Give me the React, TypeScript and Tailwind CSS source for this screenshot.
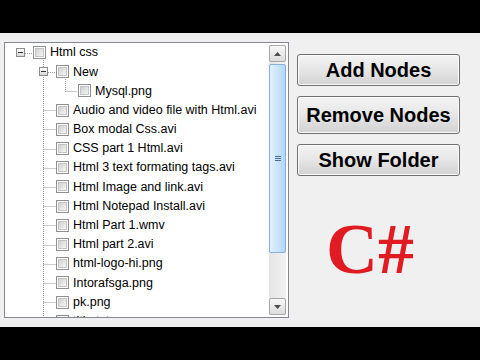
import type { ReactNode } from 'react'

type Node = {
    label: string
    level: number
    open?: boolean
}

const nodes: Node[] = [
    { label: 'Html css', level: 0, open: true },
    { label: 'New', level: 1, open: true },
    { label: 'Mysql.png', level: 2 },
    { label: 'Audio and video file with Html.avi', level: 1 },
    { label: 'Box modal Css.avi', level: 1 },
    { label: 'CSS part 1 Html.avi', level: 1 },
    { label: 'Html 3 text formating tags.avi', level: 1 },
    { label: 'Html Image and link.avi', level: 1 },
    { label: 'Html Notepad Install.avi', level: 1 },
    { label: 'Html Part 1.wmv', level: 1 },
    { label: 'Html part 2.avi', level: 1 },
    { label: 'html-logo-hi.png', level: 1 },
    { label: 'Intorafsga.png', level: 1 },
    { label: 'pk.png', level: 1 },
    { label: 'title.txt', level: 1 },
]

const indent = ['pl-0', 'pl-[23px]', 'pl-[45px]']

const ROW = 19.2

function Expander() {
    return (
        <div className="ml-[11px] w-[9px] h-[9px] border border-[#8c8c8c] bg-gradient-to-b from-white to-[#d8d8d8] flex items-center justify-center">
            <div className="w-[5px] h-px bg-[#333]" />
        </div>
    )
}

function CheckBox() {
    return (
        <div className="w-[13px] h-[13px] shrink-0 border border-[#8e8f8f] bg-white p-px">
            <div className="w-full h-full bg-gradient-to-br from-[#d0d0d0] to-[#f6f6f6] border border-[#c4c4c4]" />
        </div>
    )
}

function TreeRow({ node }: { node: Node }) {
    return (
        <div className={`h-[19.2px] flex items-center shrink-0 ${indent[node.level]}`}>
            <div className="w-[28px] shrink-0 flex items-center">
                {node.open && <Expander />}
            </div>
            <CheckBox />
            <span className="ml-[4px] text-[12.5px] text-black whitespace-nowrap leading-none">
                {node.label}
            </span>
        </div>
    )
}

// dotted connector lines of the tree
function TreeLines() {
    const cy = (i: number) => Math.round(9.6 + ROW * i) + 0.5
    const lines: ReactNode[] = []
    const dot = { stroke: '#9a9a9a', strokeWidth: 1, strokeDasharray: '1 1' }

    lines.push(<line key="r" x1={20} y1={cy(0)} x2={28} y2={cy(0)} {...dot} />)
    lines.push(<line key="v1a" x1={38.5} y1={17} x2={38.5} y2={24} {...dot} />)
    lines.push(<line key="v1b" x1={38.5} y1={34} x2={38.5} y2={280} {...dot} />)
    lines.push(<line key="n" x1={43} y1={cy(1)} x2={51} y2={cy(1)} {...dot} />)
    lines.push(<line key="v2" x1={60.5} y1={36} x2={60.5} y2={cy(2)} {...dot} />)
    lines.push(<line key="m" x1={60.5} y1={cy(2)} x2={72} y2={cy(2)} {...dot} />)
    for (let i = 3; i < nodes.length; i++) {
        lines.push(<line key={i} x1={38.5} y1={cy(i)} x2={51} y2={cy(i)} {...dot} />)
    }

    return (
        <svg className="absolute left-0 top-0 pointer-events-none" width="262" height="280">
            {lines}
        </svg>
    )
}

function ScrollButton({ down }: { down?: boolean }) {
    return (
        <div className="h-[17px] shrink-0 border border-[#a7a7a7] rounded-[2px] bg-gradient-to-b from-[#f8f8f8] to-[#dcdcdc] flex items-center justify-center">
            <svg width="7" height="4" viewBox="0 0 7 4">
                {down ? (
                    <path d="M0 0 H7 L3.5 4 Z" fill="#4d4d4d" />
                ) : (
                    <path d="M0 4 H7 L3.5 0 Z" fill="#4d4d4d" />
                )}
            </svg>
        </div>
    )
}

function ScrollBar() {
    return (
        <div className="w-[17px] shrink-0 my-[2px] mr-[2px] flex flex-col bg-gradient-to-r from-[#e4e4e4] to-[#f2f2f2]">
            <ScrollButton />
            <div className="mt-[2px] h-[189px] border border-[#86aede] rounded-[2px] bg-gradient-to-r from-[#e2f1fd] to-[#b3d8f5] flex flex-col items-center justify-center gap-px">
                <div className="w-[6px] h-px bg-[#4a6f96]" />
                <div className="w-[6px] h-px bg-[#4a6f96]" />
                <div className="w-[6px] h-px bg-[#4a6f96]" />
            </div>
            <div className="flex-1" />
            <ScrollButton down />
        </div>
    )
}

function WinButton({ children, tall }: { children: ReactNode; tall?: boolean }) {
    return (
        <button
            className={`${tall ? 'h-[38px]' : 'h-[32px]'} w-[163px] rounded-[3px] border border-[#707070] bg-gradient-to-b from-[#f4f4f4] via-[#e6e6e6] to-[#d2d2d2] shadow-[inset_0_0_0_1px_#fcfcfc] text-[20px] font-bold text-black leading-none font-['Liberation_Sans',Arial,sans-serif]`}
        >
            {children}
        </button>
    )
}

export default function App() {
    return (
        <div className="w-[480px] h-[360px] bg-black flex flex-col font-['Liberation_Sans',Arial,sans-serif]">
            <div className="h-[33px] shrink-0" />
            <div className="h-[294px] shrink-0 bg-[#f0f0f0] flex pl-[4px] pt-[9px]">
                <div className="w-[285px] h-[276px] border border-[#828790] bg-white flex">
                    <div className="flex-1 relative overflow-hidden flex flex-col">
                        <TreeLines />
                        {nodes.map((n) => (
                            <TreeRow key={n.label} node={n} />
                        ))}
                    </div>
                    <ScrollBar />
                </div>
                <div className="ml-[8px] pt-[12px] flex flex-col gap-[10px]">
                    <WinButton>Add Nodes</WinButton>
                    <WinButton tall>Remove Nodes</WinButton>
                    <WinButton>Show Folder</WinButton>
                    <div className="mt-[27px] pl-[29px] text-[72px] leading-none font-bold text-[#e11b22] font-['Liberation_Serif','Times_New_Roman',serif]">
                        C#
                    </div>
                </div>
            </div>
            <div className="flex-1" />
        </div>
    )
}
